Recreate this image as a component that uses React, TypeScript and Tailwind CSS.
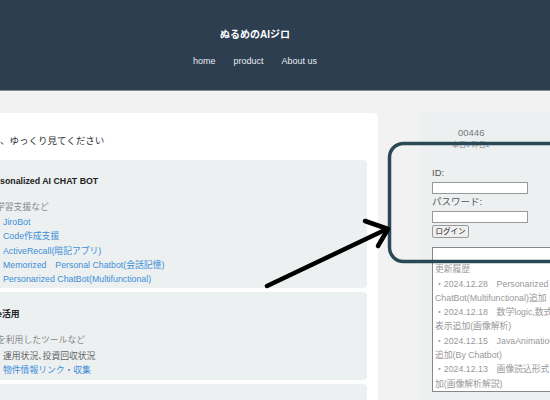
import React from 'react';

const font = { fontFamily: '"Liberation Sans", Arial, "Noto Sans CJK JP", sans-serif' };

const chatLinks = [
    'JiroBot',
    'Code作成支援',
    'ActiveRecall(暗記アプリ)',
    'Memorized　Personal Chatbot(会話記憶)',
    'Personarized ChatBot(Multifunctional)',
];

const history = [
    '',
    '更新履歴',
    '・2024.12.28　Personarized',
    'ChatBot(Multifunctional)追加',
    '・2024.12.18　数学logic,数式',
    '表示追加(画像解析)',
    '・2024.12.15　JavaAnimation',
    '追加(By Chatbot)',
    '・2024.12.13　画像読込形式',
    '加(画像解析解説)',
];

const Header: React.FC = () => (
    <header className="h-[91px] bg-[#2c3e50] border-b border-[#7f8c8d] flex flex-col items-center pr-[40px] text-white">
        <h1 className="mt-[28px] text-[10px] leading-[14px] font-bold">ぬるめのAIジロ</h1>
        <nav className="mt-[12px] flex gap-[18px] text-[9px] leading-[14px] text-[#e8ecef]">
            <a>home</a>
            <a>product</a>
            <a>About us</a>
        </nav>
    </header>
);

const MainCard: React.FC = () => (
    <div className="w-[378px] shrink-0 bg-white rounded-tr-[5px] pt-[21px] pr-[11px] text-[9.5px]">
        <p className="leading-[14px] text-[#333]">、ゆっくり見てください</p>
        <div className="mt-[12px] h-[128px] bg-[#ecf0f1] rounded-r-[4px] pt-[14px] leading-[14px] text-[8.8px]">
            <h2 className="font-bold text-[#222]">sonalized AI CHAT BOT</h2>
            <p className="mt-[12px] -ml-[4px] text-[#888]">学習支援など</p>
            <ul className="mt-[1px] pl-[3px] text-[#3d8fd6]">
                {chatLinks.map((l) => (
                    <li key={l} className="h-[14.3px] leading-[14.3px] whitespace-pre">{l}</li>
                ))}
            </ul>
        </div>
        <div className="mt-[4px] h-[88px] bg-[#ecf0f1] rounded-r-[4px] pt-[15px] leading-[14px] text-[8.8px]">
            <h2 className="-ml-[3px] font-bold text-[#222]">e活用</h2>
            <p className="mt-[12px] -ml-[3px] text-[#888]">を利用したツールなど</p>
            <p className="mt-[2px] pl-[3px] text-[#666]">運用状況､投資回収状況</p>
            <p className="pl-[3px] text-[#3d8fd6]">物件情報リンク・収集</p>
        </div>
        <div className="mt-[4px] h-[30px] bg-[#ecf0f1] rounded-r-[4px]" />
    </div>
);

const Sidebar: React.FC = () => (
    <aside className="ml-[42px] w-[150px] shrink-0 bg-[#ecf0f1] rounded-tl-[5px] pt-[13px] pl-[12px] text-[9.5px] text-[#555]">
        <p className="ml-[26px] leading-[14px] text-[#777]">00446</p>
        <p className="ml-[20px] leading-[10px] text-[7px] text-[#888]">
            本日<span className="text-[#3d8fd6]">0</span> 昨日<span className="text-[#3d8fd6]">2</span>
        </p>
        <form className="mt-[16px] flex flex-col items-start">
            <label className="leading-[14px]">ID:</label>
            <input className="mt-[2px] w-[96px] h-[12px] bg-white border border-[#999]" />
            <label className="mt-[1px] leading-[14px]">パスワード:</label>
            <input type="password" className="mt-[2px] w-[96px] h-[12px] bg-white border border-[#999]" />
            <button type="button" className="mt-[2px] w-[37px] h-[13px] bg-[#efefef] border border-[#999] rounded-[2px] text-[7.5px] leading-[11px] text-[#222]">
                ログイン
            </button>
        </form>
        <div className="mt-[9px] h-[145px] bg-white border border-[#888] pl-[2px] text-[8.8px] text-[#999] leading-[14.3px] whitespace-nowrap overflow-hidden">
            {history.map((h, i) => (
                <div key={i} className="h-[14.3px]">{h}</div>
            ))}
        </div>
    </aside>
);

const Annotation: React.FC = () => (
    <svg className="absolute inset-0 pointer-events-none" width="550" height="400" viewBox="0 0 550 400">
        <rect x="389.5" y="143.5" width="190" height="118" rx="14" fill="none" stroke="#284955" strokeWidth="3.5" />
        <g stroke="#000" strokeWidth="4.5" strokeLinecap="round" fill="none">
            <line x1="267" y1="286" x2="387" y2="229" />
            <polyline points="365,221 388,229 378,246" strokeLinejoin="round" />
        </g>
    </svg>
);

const App: React.FC = () => (
    <div className="relative w-[550px] h-[400px] overflow-hidden bg-[#f2f2f2]" style={font}>
        <Header />
        <div className="flex pt-[22px]">
            <MainCard />
            <Sidebar />
        </div>
        <Annotation />
    </div>
);

export default App;
